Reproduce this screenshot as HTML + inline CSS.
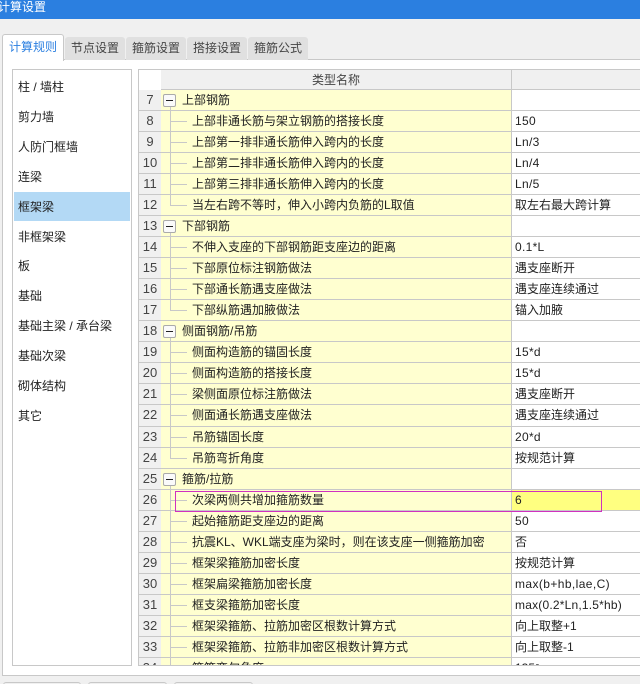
<!DOCTYPE html>
<html lang="zh-CN"><head><meta charset="utf-8"><style>
html,body{margin:0;padding:0;width:640px;height:684px;overflow:hidden;background:#f0f0f0}
body{font:12px/16px "Liberation Sans","Noto Sans CJK SC",sans-serif;color:#222;position:relative}
div,span,b,i,em{position:absolute;display:block;box-sizing:border-box;white-space:nowrap;font-style:normal;font-weight:normal}
.tb{left:0;top:0;width:640px;height:19px;background:#2b7fe0;color:#fff;padding-left:0}
.tb span{left:-2px;top:-1px}
.panel{left:2px;top:59px;width:639px;height:617px;background:#fff;border:1px solid #c8c8c8}
.tab{top:37px;height:23px;width:60px;background:#e0e0e0;border-radius:3px 3px 0 0;color:#444;text-align:center;line-height:23px}
.tab.a{left:2px;top:34px;width:62px;height:27px;background:#fff;border:1px solid #c8c8c8;border-bottom:0;color:#2b7fe0;line-height:25px;z-index:2}
.list{left:12px;top:69px;width:120px;height:597px;background:#fff;border:1px solid #c8c8c8}
.li{left:1px;width:116px;height:29.9px;line-height:31px;padding-left:4px;color:#222}
.li.s{background:#b3d9f5}
.grid{left:138px;top:69px;width:503px;height:597px;border:1px solid #c8c8c8;border-right:0;overflow:hidden;background:#fff}
.hd{left:22px;top:0;width:481px;height:20px;background:#f0f0f0;border-bottom:1px solid #c8c8c8}
.hd span{left:0;width:350px;text-align:center;color:#444;top:2px}
.hd i{left:350px;top:0;width:1px;height:19px;background:#c8c8c8}
.rows{left:0;top:20px;width:503px}
.r{position:relative;width:503px;height:21.04px;border-bottom:1px solid #c8c8c8;background:#fff}
.n{left:0;top:0;width:22px;height:100%;background:#f0f0f0;font:13px/20px "Liberation Sans",sans-serif;text-align:center;color:#444}
.y{left:22px;top:0;width:351px;height:100%;background:#ffffd0;border-right:1px solid #c8c8c8}
.v{left:31px;top:0;width:1px;height:100%;background:#c8c8c8}
.v.l{height:50%}
.v.p{top:16px;height:5px}
.h{left:31px;top:10px;width:17px;height:1px;background:#c8c8c8}
.box{left:24px;top:4px;width:13px;height:13px;border:1px solid #aaa;border-radius:2px;background:#fafafa}
.box:after{content:"";position:absolute;left:2px;top:5px;width:7px;height:1px;background:#222}
.t{left:53px;top:2px;color:#222}
.w{left:376px;top:2px;color:#222}
.hl{background:#ffff80;left:373px;top:0;width:130px;height:100%}
.mark{left:175px;top:491px;width:427px;height:21px;border:1px solid #d030c0;z-index:3}
.btn{top:682px;height:10px;background:#f0f0f0;border:1px solid #c8c8c8;border-radius:3px}
</style></head><body>
<div class="tb"><span>计算设置</span></div>
<div class="panel"></div>
<div class="tab a">计算规则</div>
<div class="tab" style="left:65px">节点设置</div>
<div class="tab" style="left:126px">箍筋设置</div>
<div class="tab" style="left:187px">搭接设置</div>
<div class="tab" style="left:248px">箍筋公式</div>
<div class="list">
<div class="li" style="top:2px">柱 / 墙柱</div>
<div class="li" style="top:31.9px">剪力墙</div>
<div class="li" style="top:61.8px">人防门框墙</div>
<div class="li" style="top:91.7px">连梁</div>
<div class="li s" style="top:121.6px">框架梁</div>
<div class="li" style="top:151.5px">非框架梁</div>
<div class="li" style="top:181.4px">板</div>
<div class="li" style="top:211.3px">基础</div>
<div class="li" style="top:241.2px">基础主梁 / 承台梁</div>
<div class="li" style="top:271.1px">基础次梁</div>
<div class="li" style="top:301px">砌体结构</div>
<div class="li" style="top:330.9px">其它</div>
</div>
<div class="grid">
<div class="hd"><span>类型名称</span><i></i></div>
<div class="rows">
<div class="r"><b class="n">7</b><i class="y"></i><i class="v p"></i><i class="box"></i><span class="t" style="left:43px">上部钢筋</span></div>
<div class="r"><b class="n">8</b><i class="y"></i><i class="v"></i><i class="h"></i><span class="t">上部非通长筋与架立钢筋的搭接长度</span><span class="w" style="letter-spacing:.3px">150</span></div>
<div class="r"><b class="n">9</b><i class="y"></i><i class="v"></i><i class="h"></i><span class="t">上部第一排非通长筋伸入跨内的长度</span><span class="w" style="letter-spacing:.3px">Ln/3</span></div>
<div class="r"><b class="n">10</b><i class="y"></i><i class="v"></i><i class="h"></i><span class="t">上部第二排非通长筋伸入跨内的长度</span><span class="w" style="letter-spacing:.3px">Ln/4</span></div>
<div class="r"><b class="n">11</b><i class="y"></i><i class="v"></i><i class="h"></i><span class="t">上部第三排非通长筋伸入跨内的长度</span><span class="w" style="letter-spacing:.3px">Ln/5</span></div>
<div class="r"><b class="n">12</b><i class="y"></i><i class="v l"></i><i class="h"></i><span class="t">当左右跨不等时，伸入小跨内负筋的L取值</span><span class="w">取左右最大跨计算</span></div>
<div class="r"><b class="n">13</b><i class="y"></i><i class="v p"></i><i class="box"></i><span class="t" style="left:43px">下部钢筋</span></div>
<div class="r"><b class="n">14</b><i class="y"></i><i class="v"></i><i class="h"></i><span class="t">不伸入支座的下部钢筋距支座边的距离</span><span class="w" style="letter-spacing:.3px">0.1*L</span></div>
<div class="r"><b class="n">15</b><i class="y"></i><i class="v"></i><i class="h"></i><span class="t">下部原位标注钢筋做法</span><span class="w">遇支座断开</span></div>
<div class="r"><b class="n">16</b><i class="y"></i><i class="v"></i><i class="h"></i><span class="t">下部通长筋遇支座做法</span><span class="w">遇支座连续通过</span></div>
<div class="r"><b class="n">17</b><i class="y"></i><i class="v l"></i><i class="h"></i><span class="t">下部纵筋遇加腋做法</span><span class="w">锚入加腋</span></div>
<div class="r"><b class="n">18</b><i class="y"></i><i class="v p"></i><i class="box"></i><span class="t" style="left:43px">侧面钢筋/吊筋</span></div>
<div class="r"><b class="n">19</b><i class="y"></i><i class="v"></i><i class="h"></i><span class="t">侧面构造筋的锚固长度</span><span class="w" style="letter-spacing:.3px">15*d</span></div>
<div class="r"><b class="n">20</b><i class="y"></i><i class="v"></i><i class="h"></i><span class="t">侧面构造筋的搭接长度</span><span class="w" style="letter-spacing:.3px">15*d</span></div>
<div class="r"><b class="n">21</b><i class="y"></i><i class="v"></i><i class="h"></i><span class="t">梁侧面原位标注筋做法</span><span class="w">遇支座断开</span></div>
<div class="r"><b class="n">22</b><i class="y"></i><i class="v"></i><i class="h"></i><span class="t">侧面通长筋遇支座做法</span><span class="w">遇支座连续通过</span></div>
<div class="r"><b class="n">23</b><i class="y"></i><i class="v"></i><i class="h"></i><span class="t">吊筋锚固长度</span><span class="w" style="letter-spacing:.3px">20*d</span></div>
<div class="r"><b class="n">24</b><i class="y"></i><i class="v l"></i><i class="h"></i><span class="t">吊筋弯折角度</span><span class="w">按规范计算</span></div>
<div class="r"><b class="n">25</b><i class="y"></i><i class="v p"></i><i class="box"></i><span class="t" style="left:43px">箍筋/拉筋</span></div>
<div class="r"><b class="n">26</b><i class="y"></i><i class="hl"></i><i class="v"></i><i class="h"></i><span class="t">次梁两侧共增加箍筋数量</span><span class="w">6</span></div>
<div class="r"><b class="n">27</b><i class="y"></i><i class="v"></i><i class="h"></i><span class="t">起始箍筋距支座边的距离</span><span class="w" style="letter-spacing:.3px">50</span></div>
<div class="r"><b class="n">28</b><i class="y"></i><i class="v"></i><i class="h"></i><span class="t">抗震KL、WKL端支座为梁时，则在该支座一侧箍筋加密</span><span class="w">否</span></div>
<div class="r"><b class="n">29</b><i class="y"></i><i class="v"></i><i class="h"></i><span class="t">框架梁箍筋加密长度</span><span class="w">按规范计算</span></div>
<div class="r"><b class="n">30</b><i class="y"></i><i class="v"></i><i class="h"></i><span class="t">框架扁梁箍筋加密长度</span><span class="w" style="letter-spacing:.4px">max(b+hb,lae,C)</span></div>
<div class="r"><b class="n">31</b><i class="y"></i><i class="v"></i><i class="h"></i><span class="t">框支梁箍筋加密长度</span><span class="w" style="letter-spacing:.2px">max(0.2*Ln,1.5*hb)</span></div>
<div class="r"><b class="n">32</b><i class="y"></i><i class="v"></i><i class="h"></i><span class="t">框架梁箍筋、拉筋加密区根数计算方式</span><span class="w">向上取整+1</span></div>
<div class="r"><b class="n">33</b><i class="y"></i><i class="v"></i><i class="h"></i><span class="t">框架梁箍筋、拉筋非加密区根数计算方式</span><span class="w">向上取整-1</span></div>
<div class="r"><b class="n">34</b><i class="y"></i><i class="v"></i><i class="h"></i><span class="t">箍筋弯勾角度</span><span class="w">135°</span></div>
</div>
</div>
<div class="mark"></div>
<div class="btn" style="left:3px;width:78px"></div>
<div class="btn" style="left:88px;width:79px"></div>
<div class="btn" style="left:174px;width:79px"></div>
</body></html>
